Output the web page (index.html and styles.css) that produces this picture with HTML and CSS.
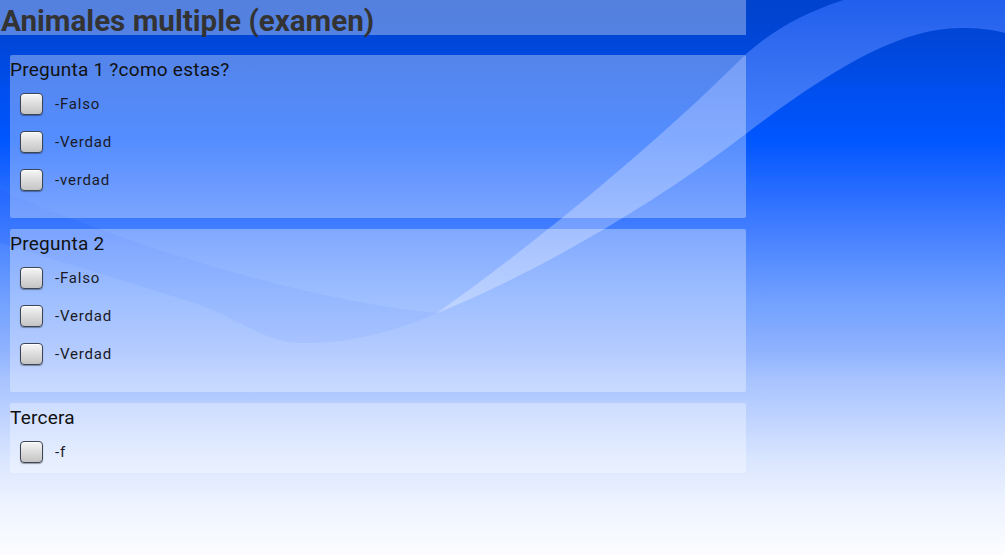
FILE: index.html
```html
<!DOCTYPE html>
<html lang="es">
<head>
<meta charset="utf-8">
<title>Animales multiple (examen)</title>
<link rel="stylesheet" href="styles.css">
</head>
<body>
<div class="screen">
  <svg class="wallpaper" viewBox="0 0 1005 555" width="1005" height="555" aria-hidden="true">
    <defs>
      <linearGradient id="bandFill" gradientUnits="userSpaceOnUse" x1="0" y1="0" x2="0" y2="320">
        <stop offset="0" stop-color="rgb(50,110,255)" stop-opacity="0.65"/>
        <stop offset="1" stop-color="#ffffff" stop-opacity="0.3"/>
      </linearGradient>
    </defs>
    <path class="crescent" d="M0,190 C130,245 300,300 437,313 C400,330 350,344 300,343 C265,342 240,320 200,305 C140,285 70,265 0,243 Z"/>
    <path fill="url(#bandFill)" d="M437,313 C520,255 650,150 745,55 C775,28 810,10 850,-2 L1005,-2 L1005,33 C995,30 980,28 960,28 C900,28 830,70 747,133 C640,215 520,280 437,313 Z"/>
  </svg>

  <main class="content">
    <h1 class="title">Animales multiple (examen)</h1>
    <div class="panels">
      <section class="panel">
        <h2 class="question">Pregunta 1 ?como estas?</h2>
        <label class="option"><input type="checkbox" class="check"><span>-Falso</span></label>
        <label class="option"><input type="checkbox" class="check"><span>-Verdad</span></label>
        <label class="option"><input type="checkbox" class="check"><span>-verdad</span></label>
      </section>
      <section class="panel">
        <h2 class="question">Pregunta 2</h2>
        <label class="option"><input type="checkbox" class="check"><span>-Falso</span></label>
        <label class="option"><input type="checkbox" class="check"><span>-Verdad</span></label>
        <label class="option"><input type="checkbox" class="check"><span>-Verdad</span></label>
      </section>
      <section class="panel panel--short">
        <h2 class="question">Tercera</h2>
        <label class="option"><input type="checkbox" class="check"><span>-f</span></label>
      </section>
    </div>
  </main>
</div>
</body>
</html>
```

FILE: styles.css
```css
html, body {
  margin: 0;
  padding: 0;
}

body {
  width: 1005px;
  height: 555px;
  overflow: hidden;
  font-family: Roboto, "Liberation Sans", sans-serif;
}

.screen {
  position: relative;
  width: 1005px;
  height: 555px;
  overflow: hidden;
  background: linear-gradient(to bottom,
    #0043cc 0%,
    #0046d8 7.2%,
    #0050f2 18%,
    #0056ff 25.2%,
    #2e70ff 36%,
    #5088ff 45%,
    #70a0ff 54%,
    #8fb2ff 63%,
    #a8c4ff 68.5%,
    #c0d4ff 75.7%,
    #dae6ff 82.9%,
    #ecf2ff 90.1%,
    #fcfdff 100%);
}

.wallpaper {
  position: absolute;
  top: 0;
  left: 0;
  display: block;
}

.crescent {
  fill: rgb(0, 70, 255);
  fill-opacity: 0.1;
}

.content {
  position: relative;
  z-index: 1;
  width: 746px;
  display: flex;
  flex-direction: column;
}

.title {
  margin: 0;
  height: 35px;
  box-sizing: border-box;
  padding: 4px 0 0 1px;
  font-family: Roboto, "Liberation Sans", sans-serif;
  font-weight: 700;
  font-size: 29.6px;
  line-height: 1.172;
  color: #333333;
  background: rgba(255, 255, 255, 0.33);
  white-space: nowrap;
}

.panels {
  display: flex;
  flex-direction: column;
  gap: 11px;
  padding: 20px 0 0 10px;
}

.panel {
  background: rgba(255, 255, 255, 0.33);
  border-radius: 2px;
  padding: 4px 0 19px;
}

.panel--short {
  padding-bottom: 2px;
}

.question {
  margin: 0 0 4px;
  font-weight: 400;
  font-size: 19px;
  line-height: 22px;
  letter-spacing: 0.25px;
  color: #111111;
}

.option {
  display: flex;
  align-items: center;
  gap: 12px;
  height: 38px;
  padding-left: 10px;
  font-size: 15px;
  letter-spacing: 0.8px;
  color: #1a1a26;
}

.check {
  appearance: none;
  -webkit-appearance: none;
  margin: 0;
  width: 23px;
  height: 22px;
  box-sizing: border-box;
  border: 1px solid #3d4454;
  border-radius: 4px;
  background: linear-gradient(to bottom, #f6f6f6 0%, #dcdcdc 50%, #c4c4c4 100%);
  box-shadow: 0 1px 1px rgba(0, 0, 0, 0.35), inset 0 1px 0 #ffffff;
}
```
